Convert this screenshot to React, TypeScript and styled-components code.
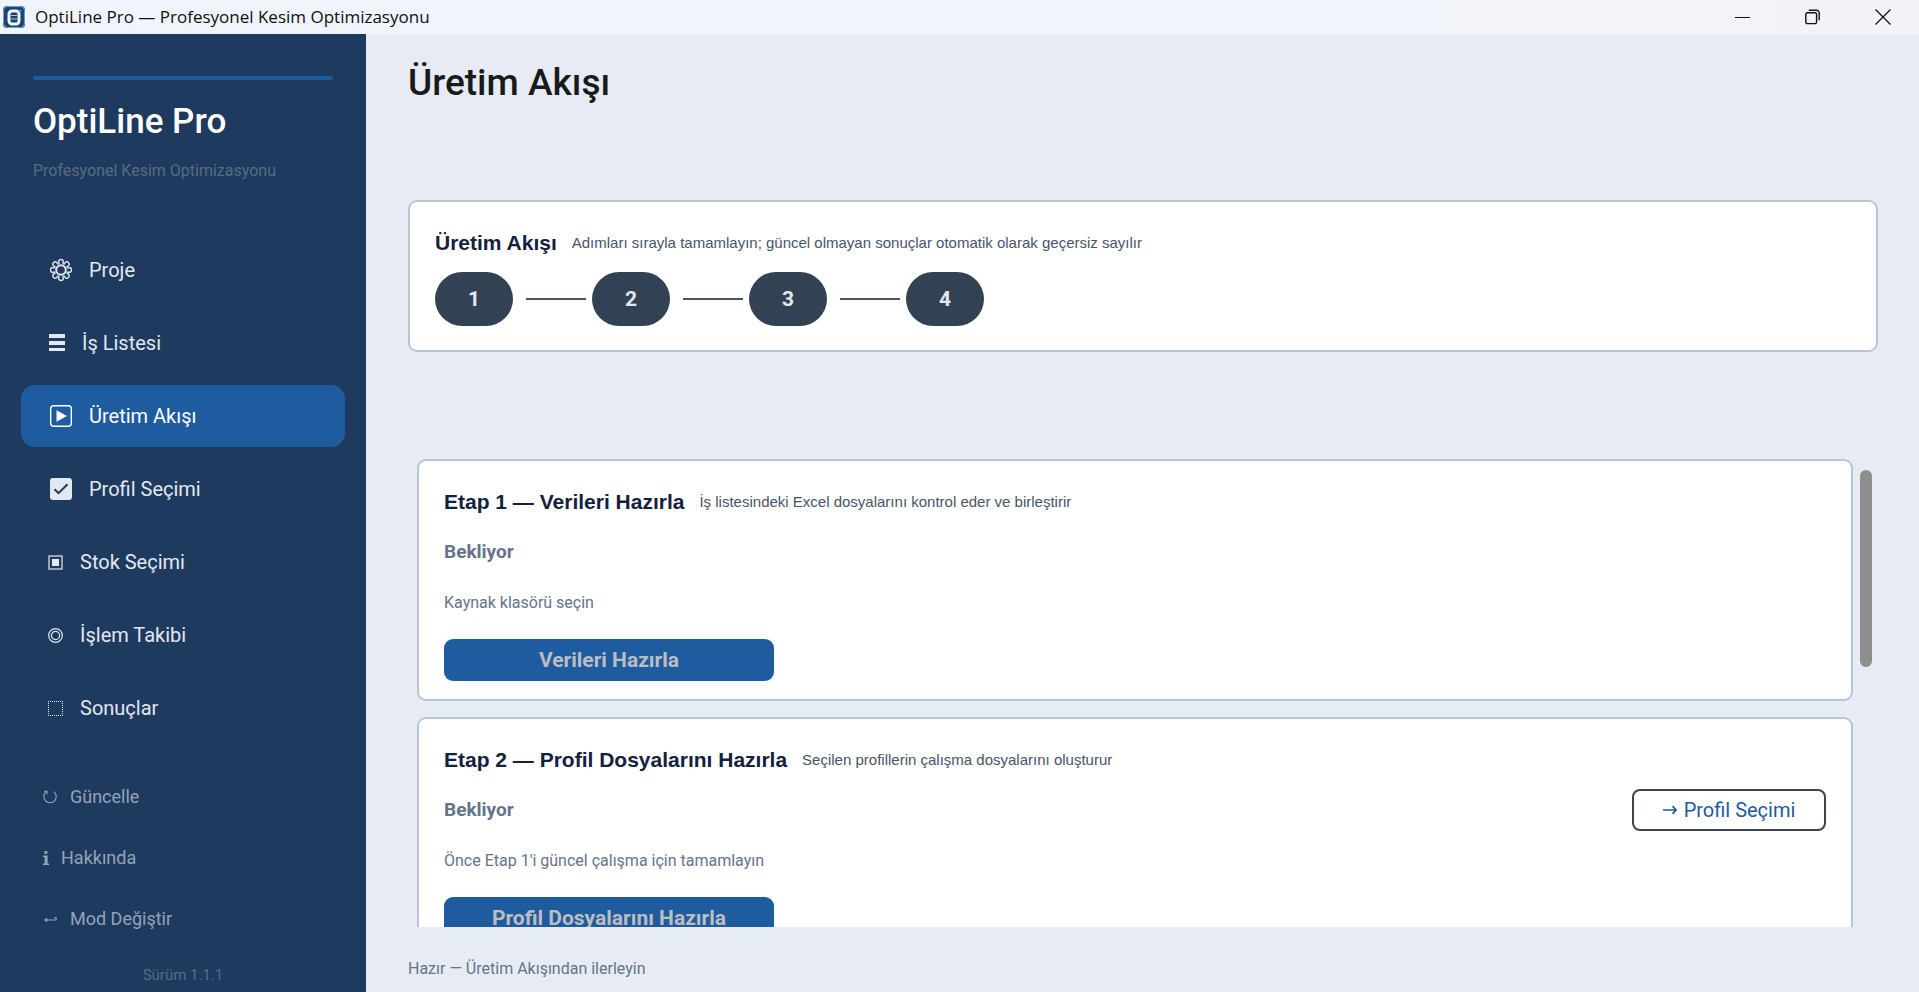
import React from "react";
import styled, { createGlobalStyle } from "styled-components";

const ui = '"Roboto", "Liberation Sans", sans-serif';
const heading = '"Liberation Sans", Arial, sans-serif';

const GlobalStyle = createGlobalStyle`
  * { box-sizing: border-box; }
  body { margin: 0; font-family: ${ui}; background: #e7ecf4; }
  h1, h2, p { margin: 0; }
  button { font-family: inherit; cursor: pointer; }
`;

const Window = styled.div`
  display: flex;
  flex-direction: column;
  height: 100vh;
`;

const TitleBar = styled.header`
  display: flex;
  align-items: center;
  height: 34px;
  flex: none;
  padding: 0 1px 0 3px;
  gap: 10px;
  background: linear-gradient(90deg, #f0f4fd, #f1f3f8);
  color: #101010;
`;

const WindowTitle = styled.span`
  flex: 1;
  font-family: "Open Sans", "Noto Sans", sans-serif;
  font-size: 17px;
  line-height: 24px;
`;

const WindowControls = styled.div`
  display: flex;
  height: 100%;
`;

const WindowButton = styled.button`
  display: flex;
  align-items: center;
  justify-content: center;
  width: 70px;
  padding: 0;
  border: 0;
  background: none;
`;

const Body = styled.div`
  display: flex;
  flex: 1;
  min-height: 0;
`;

const Sidebar = styled.aside`
  display: flex;
  flex-direction: column;
  flex: none;
  width: 366px;
  background: #1f3a5f;
`;

const Brand = styled.div`
  padding: 42px 33px 0;
  height: 205px;
`;

const BrandRule = styled.div`
  height: 4px;
  border-radius: 2px;
  background: #1e5b9f;
`;

const BrandName = styled.p`
  margin-top: 20px;
  font-size: 35px;
  line-height: 44px;
  font-weight: 500;
  color: #ffffff;
`;

const BrandTagline = styled.p`
  margin-top: 15px;
  font-size: 16px;
  line-height: 24px;
  color: #5a6b80;
`;

const Nav = styled.nav`
  display: flex;
  flex-direction: column;
  gap: 11px;
  padding: 0 21px;
`;

const NavButton = styled.button<{ $active?: boolean }>`
  display: flex;
  align-items: center;
  gap: 17px;
  height: 62px;
  padding: 0 0 0 27px;
  border: 0;
  border-radius: 14px;
  background: ${(p) => (p.$active ? "#1e5b9f" : "transparent")};
  color: ${(p) => (p.$active ? "#ffffff" : "#e2e8f0")};
  font-size: 20px;
  line-height: 24px;
`;

const SecondaryNav = styled.nav`
  display: flex;
  flex-direction: column;
  margin-top: 27px;
  padding: 0 21px;
`;

const SecondaryButton = styled.button`
  display: flex;
  align-items: center;
  gap: 13px;
  height: 61px;
  padding: 0 0 0 22px;
  border: 0;
  background: none;
  color: #94a3b8;
  font-size: 18px;
  line-height: 24px;
`;

const Version = styled.p`
  margin-top: 16px;
  font-size: 15px;
  line-height: 20px;
  text-align: center;
  color: #5a6b80;
`;

const Main = styled.main`
  display: flex;
  flex-direction: column;
  flex: 1;
  min-width: 0;
  padding: 27px 41px 0 42px;
`;

const PageTitle = styled.h1`
  height: 139px;
  font-size: 37px;
  line-height: 44px;
  font-weight: 500;
  color: #1a1a1a;
`;

const Card = styled.section<{ $compact?: boolean }>`
  flex: none;
  padding: 27px 25px ${(p) => (p.$compact ? 18 : 24)}px;
  border: 2px solid #b8c5d6;
  border-radius: 9px;
  background: #ffffff;
`;

const CardHeader = styled.div`
  display: flex;
  align-items: center;
  gap: 15px;
  height: 28px;
`;

const CardTitle = styled.h2`
  font-family: ${heading};
  font-size: 21px;
  line-height: 28px;
  font-weight: 700;
  color: #14213d;
`;

const CardHint = styled.p`
  font-family: ${heading};
  font-size: 15px;
  line-height: 24px;
  color: #475569;
`;

const Steps = styled.div`
  display: flex;
  align-items: center;
  margin-top: 15px;
`;

const Step = styled.div`
  display: flex;
  align-items: center;
  justify-content: center;
  width: 78px;
  height: 54px;
  border-radius: 27px;
  background: #334155;
  color: #e2e8f0;
  font-size: 21px;
  font-weight: 700;
`;

const Connector = styled.div`
  width: 60px;
  height: 2px;
  margin: 0 6px 0 13px;
  background: #475569;
`;

const StageScroller = styled.div`
  display: flex;
  flex: 1;
  min-height: 0;
  margin-top: 107px;
  padding: 0 6px 0 9px;
  gap: 7px;
`;

const StageList = styled.div`
  display: flex;
  flex-direction: column;
  flex: 1;
  gap: 16px;
  overflow-y: auto;
  scrollbar-width: none;
`;

const ScrollThumb = styled.div`
  width: 12px;
  height: 42%;
  margin-top: 11px;
  border-radius: 6px;
  background: #8e8e8e;
`;

const StageStatusRow = styled.div`
  display: flex;
  align-items: center;
  justify-content: space-between;
  height: 42px;
  margin-top: 15px;
`;

const StageStatus = styled.p`
  font-size: 19px;
  line-height: 24px;
  font-weight: 700;
  color: #64748b;
`;

const StageNote = styled.p`
  margin-top: 18px;
  font-size: 16px;
  line-height: 24px;
  color: #64748b;
`;

const PrimaryButton = styled.button`
  display: block;
  width: 330px;
  height: 42px;
  margin-top: 24px;
  border: 0;
  border-radius: 9px;
  background: #1e5b9f;
  color: #bbbdc0;
  font-size: 21px;
  line-height: 24px;
  font-weight: 700;
`;

const OutlineButton = styled.button`
  display: flex;
  align-items: center;
  justify-content: center;
  gap: 7px;
  width: 194px;
  height: 42px;
  border: 2px solid #3e454a;
  border-radius: 8px;
  background: #ffffff;
  color: #1e5b9f;
  font-size: 20px;
  line-height: 24px;
`;

const StatusBar = styled.footer`
  flex: none;
  height: 65px;
  padding-top: 30px;
  font-size: 16px;
  line-height: 24px;
  color: #64748b;
`;

const AppLogo = () => (
  <svg width="22" height="22" viewBox="0 0 22 22" aria-hidden="true">
    <rect width="22" height="22" rx="4" fill="#1b4a7c" />
    <rect x="0.5" y="0.5" width="21" height="21" rx="4" fill="none" stroke="#7d98b3" />
    <rect x="2" y="2" width="18" height="18" rx="3" fill="#174273" />
    <rect x="6" y="5" width="10" height="13" rx="3" fill="none" stroke="#f2f6fa" strokeWidth="3" />
    <path d="M8 9.5h6M8 13h6" stroke="#b9c8da" strokeWidth="1" />
    <circle cx="17" cy="5" r="1.5" fill="#3b9be0" />
  </svg>
);

const GearIcon = () => (
  <svg width="24" height="24" viewBox="0 0 24 24" fill="none" stroke="currentColor" strokeWidth="1.4" aria-hidden="true">
    <g transform="translate(1 0)">
      {[0, 45, 90, 135, 180, 225, 270, 315].map((a) => (
        <path key={a} d="M10.2 5.2c-.9-1.400-.9-3.700 1.800-3.700s2.700 2.300 1.800 3.700" transform={`rotate(${a} 12 12)`} />
      ))}
      {[22.5, 67.5, 112.5, 157.5, 202.5, 247.5, 292.5, 337.5].map((a) => (
        <path key={a} d="M11.100 4.900a1.100 1.100 0 0 0 1.800 0" transform={`rotate(${a} 12 12)`} />
      ))}
      <circle cx="12" cy="12" r="4.800" strokeWidth="2" />
    </g>
  </svg>
);

const ListIcon = () => (
  <svg width="17" height="18" viewBox="0 0 17 18" fill="currentColor" aria-hidden="true">
    <path d="M1 0h16v4H1zM1 7h16v4H1zM1 14h16v3H1z" />
  </svg>
);

const PlayBoxIcon = () => (
  <svg width="24" height="24" viewBox="0 0 24 24" aria-hidden="true">
    <rect x="2.7" y="1.7" width="20.6" height="20.6" rx="3" fill="none" stroke="currentColor" strokeWidth="1.4" />
    <path d="M8.5 6.2v11.6L19 12z" fill="currentColor" />
  </svg>
);

const CheckBoxIcon = () => (
  <svg width="24" height="24" viewBox="0 0 24 24" aria-hidden="true">
    <rect x="2" y="1" width="22" height="22" rx="3" fill="currentColor" />
    <path d="M6.5 12.2l4 4 9-9" fill="none" stroke="#1f3a5f" strokeWidth="2" />
  </svg>
);

const StockIcon = () => (
  <svg width="15" height="15" viewBox="0 0 15 15" aria-hidden="true">
    <rect x="1" y="1" width="13" height="13" fill="none" stroke="currentColor" strokeWidth="1.2" />
    <rect x="4" y="4" width="7" height="7" fill="currentColor" />
  </svg>
);

const TargetIcon = () => (
  <svg width="15" height="15" viewBox="0 0 15 15" fill="none" stroke="currentColor" strokeWidth="1.2" aria-hidden="true">
    <circle cx="7.5" cy="7.5" r="6.8" />
    <circle cx="7.5" cy="7.5" r="4.1" />
  </svg>
);

const DottedIcon = () => (
  <svg width="15" height="15" viewBox="0 0 15 15" aria-hidden="true">
    <path
      d="M0 .5h15M0 14.500h15M.5 0v15M14.500 0v15"
      fill="none"
      stroke="currentColor"
      strokeDasharray="1 1"
      shapeRendering="crispEdges"
    />
  </svg>
);

const RefreshIcon = () => (
  <svg width="14" height="14" viewBox="0 0 14 14" fill="none" stroke="currentColor" strokeWidth="1.1" aria-hidden="true">
    <path d="M10.8 1.6a6.2 6.2 0 1 1-8 .4M1 1.2h3v3" />
  </svg>
);

const InfoIcon = () => (
  <svg width="5" height="14" viewBox="0 0 5 14" fill="currentColor" overflow="visible" aria-hidden="true">
    <rect x="1.4" y="0" width="3" height="3" />
    <path d="M0 4.600h4.600v8H6V14H0v-1.400h1.600V6H0z" />
  </svg>
);

const ReturnIcon = () => (
  <svg width="14" height="8" viewBox="0 0 14 8" fill="none" stroke="currentColor" strokeWidth="1.2" aria-hidden="true">
    <path d="M1.5 5h11.600V2.600h-1.600" />
    <path d="M4 3L1.3 5 4 6.800z" fill="currentColor" strokeWidth="0.5" />
  </svg>
);

const ArrowIcon = () => (
  <svg width="14" height="10" viewBox="0 0 14 10" fill="none" stroke="currentColor" strokeWidth="1.7" aria-hidden="true">
    <path d="M0 5h13M9.5 1.2L13 5l-3.5 3.8" />
  </svg>
);

const navItems = [
  { label: "Proje", Icon: GearIcon },
  { label: "İş Listesi", Icon: ListIcon },
  { label: "Üretim Akışı", Icon: PlayBoxIcon, active: true },
  { label: "Profil Seçimi", Icon: CheckBoxIcon },
  { label: "Stok Seçimi", Icon: StockIcon },
  { label: "İşlem Takibi", Icon: TargetIcon },
  { label: "Sonuçlar", Icon: DottedIcon },
];

const secondaryItems = [
  { label: "Güncelle", Icon: RefreshIcon },
  { label: "Hakkında", Icon: InfoIcon },
  { label: "Mod Değiştir", Icon: ReturnIcon },
];

const stages = [
  {
    title: "Etap 1 — Verileri Hazırla",
    hint: "İş listesindeki Excel dosyalarını kontrol eder ve birleştirir",
    note: "Kaynak klasörü seçin",
    action: "Verileri Hazırla",
  },
  {
    title: "Etap 2 — Profil Dosyalarını Hazırla",
    hint: "Seçilen profillerin çalışma dosyalarını oluşturur",
    note: "Önce Etap 1'i güncel çalışma için tamamlayın",
    action: "Profil Dosyalarını Hazırla",
    link: "Profil Seçimi",
  },
];

export default function App() {
  return (
    <Window>
      <GlobalStyle />
      <TitleBar>
        <AppLogo />
        <WindowTitle>OptiLine Pro — Profesyonel Kesim Optimizasyonu</WindowTitle>
        <WindowControls>
          <WindowButton aria-label="Simge durumuna küçült">
            <svg width="16" height="16" viewBox="0 0 16 16"><path d="M0 8.5h15" stroke="#111" /></svg>
          </WindowButton>
          <WindowButton aria-label="Önceki boyut">
            <svg width="16" height="16" viewBox="0 0 16 16" fill="none" stroke="#111" strokeWidth="1.4">
              <rect x="0.8" y="3.8" width="10.8" height="10.8" rx="1.5" />
              <path d="M3.8 1.2h7.4a3 3 0 0 1 3 3v7" />
            </svg>
          </WindowButton>
          <WindowButton aria-label="Kapat">
            <svg width="16" height="16" viewBox="0 0 16 16"><path d="M.5.5l15 15M15.5.5l-15 15" stroke="#111" strokeWidth="1.3" /></svg>
          </WindowButton>
        </WindowControls>
      </TitleBar>
      <Body>
        <Sidebar>
          <Brand>
            <BrandRule />
            <BrandName>OptiLine Pro</BrandName>
            <BrandTagline>Profesyonel Kesim Optimizasyonu</BrandTagline>
          </Brand>
          <Nav>
            {navItems.map(({ label, Icon, active }) => (
              <NavButton key={label} $active={active} aria-current={active ? "page" : undefined}>
                <Icon />
                {label}
              </NavButton>
            ))}
          </Nav>
          <SecondaryNav>
            {secondaryItems.map(({ label, Icon }) => (
              <SecondaryButton key={label}>
                <Icon />
                {label}
              </SecondaryButton>
            ))}
          </SecondaryNav>
          <Version>Sürüm 1.1.1</Version>
        </Sidebar>
        <Main>
          <PageTitle>Üretim Akışı</PageTitle>
          <Card>
            <CardHeader>
              <CardTitle>Üretim Akışı</CardTitle>
              <CardHint>Adımları sırayla tamamlayın; güncel olmayan sonuçlar otomatik olarak geçersiz sayılır</CardHint>
            </CardHeader>
            <Steps>
              {[1, 2, 3, 4].map((n) => (
                <React.Fragment key={n}>
                  {n > 1 && <Connector />}
                  <Step>{n}</Step>
                </React.Fragment>
              ))}
            </Steps>
          </Card>
          <StageScroller>
            <StageList>
              {stages.map((s) => (
                <Card key={s.title} $compact>
                  <CardHeader>
                    <CardTitle>{s.title}</CardTitle>
                    <CardHint>{s.hint}</CardHint>
                  </CardHeader>
                  <StageStatusRow>
                    <StageStatus>Bekliyor</StageStatus>
                    {s.link && (
                      <OutlineButton>
                        <ArrowIcon />
                        {s.link}
                      </OutlineButton>
                    )}
                  </StageStatusRow>
                  <StageNote>{s.note}</StageNote>
                  <PrimaryButton>{s.action}</PrimaryButton>
                </Card>
              ))}
            </StageList>
            <ScrollThumb />
          </StageScroller>
          <StatusBar>Hazır — Üretim Akışından ilerleyin</StatusBar>
        </Main>
      </Body>
    </Window>
  );
}
